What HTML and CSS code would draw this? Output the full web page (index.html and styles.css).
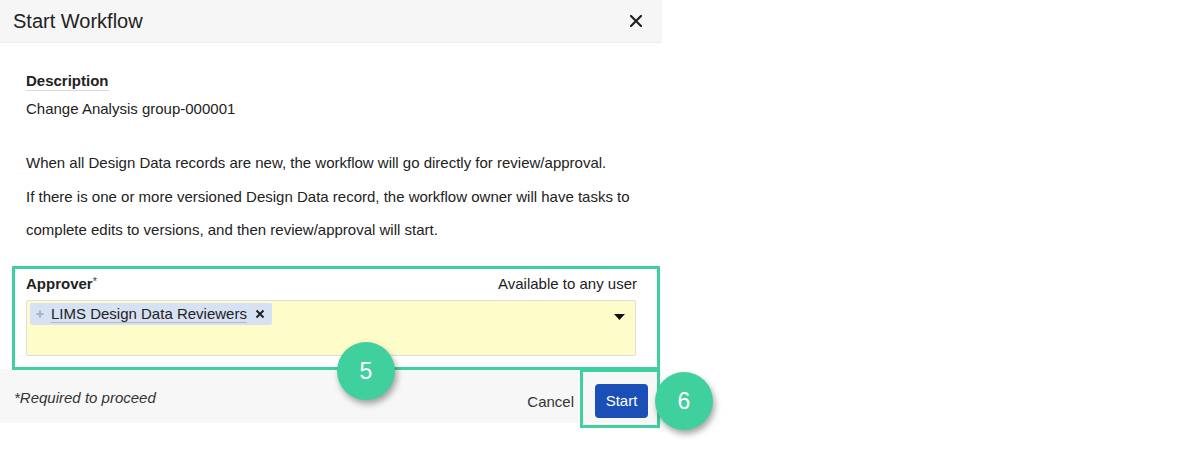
FILE: index.html
```html
<!DOCTYPE html>
<html lang="en">
<head>
    <meta charset="UTF-8">
    <meta name="viewport" content="width=device-width, initial-scale=1.0">
    <title>Start Workflow</title>
    <link rel="stylesheet" href="styles.css">
</head>
<body>
    <div class="dialog">
        <div class="dialog-header">
            <h2>Start Workflow</h2>
            <button class="close" type="button" aria-label="Close">
                <svg width="12" height="12" viewBox="0 0 12 12"><path d="M1 1 L11 11 M11 1 L1 11" stroke="#222" stroke-width="2.2" stroke-linecap="square"/></svg>
            </button>
        </div>

        <div class="dialog-body">
            <div class="section-label">Description</div>
            <p class="description">Change Analysis group-000001</p>
            <div class="notes">
                <p>When all Design Data records are new, the workflow will go directly for review/approval.</p>
                <p>If there is one or more versioned Design Data record, the workflow owner will have tasks to</p>
                <p>complete edits to versions, and then review/approval will start.</p>
            </div>

            <div class="field">
                <div class="field-top">
                    <label>Approver<span class="req">*</span></label>
                    <span class="hint">Available to any user</span>
                </div>
                <div class="picker">
                    <span class="chip">
                        <svg class="chip-grip" width="8" height="8" viewBox="0 0 8 8"><path d="M4 0.5 V7.5 M0.5 4 H7.5" stroke="#a9b3c2" stroke-width="2"/></svg>
                        <span class="chip-text">LIMS Design Data Reviewers</span>
                        <svg class="chip-x" width="10" height="10" viewBox="0 0 10 10"><path d="M1.5 1.5 L8.5 8.5 M8.5 1.5 L1.5 8.5" stroke="#222" stroke-width="2"/></svg>
                    </span>
                    <svg class="caret" width="11" height="6" viewBox="0 0 11 6"><path d="M0 0 H11 L5.5 6 Z" fill="#111"/></svg>
                </div>
            </div>
        </div>

        <div class="dialog-footer">
            <span class="required-note">*Required to proceed</span>
            <div class="actions">
                <button class="btn-link" type="button">Cancel</button>
                <button class="btn-primary" type="button">Start</button>
            </div>
        </div>

        <!-- tutorial annotations -->
        <div class="mark mark-field"></div>
        <div class="mark mark-start"></div>
        <div class="step step-5">5</div>
        <div class="step step-6">6</div>
    </div>
</body>
</html>
```

FILE: styles.css
```css
body {
    margin: 0;
    min-height: 100vh;
    background: #fff;
    font-family: "Liberation Sans", Arial, sans-serif;
    color: #222;
}
.dialog {
    position: relative;
    width: 662px;
    background: #fff;
}
.dialog-header {
    display: flex;
    align-items: center;
    justify-content: space-between;
    height: 43px;
    padding: 0 20px 0 13px;
    background: #f6f6f6;
    border-bottom: 1px solid #ececec;
    box-sizing: border-box;
}
.dialog-header h2 {
    margin: 0;
    font-size: 20px;
    font-weight: normal;
    color: #222;
}
.close {
    display: flex;
    padding: 0;
    border: none;
    background: none;
    cursor: pointer;
}
.dialog-body {
    padding: 29px 26px 0 26px;
}
.section-label {
    display: inline-block;
    font-size: 15px;
    font-weight: bold;
    line-height: 18px;
    border-bottom: 1px solid #d9d9d9;
}
.description {
    margin: 9px 0 0 0;
    font-size: 15px;
    line-height: 18px;
}
.notes {
    margin-top: 28px;
}
.notes p {
    margin: 0;
    font-size: 15px;
    line-height: 33.5px;
    color: #222;
}
.field {
    margin-top: 28px;
}
.field-top {
    display: flex;
    justify-content: space-between;
    align-items: center;
    height: 18px;
    font-size: 15px;
}
.field-top label {
    font-weight: bold;
}
.req {
    font-size: 11px;
    vertical-align: top;
    line-height: 12px;
    color: #444;
    font-weight: normal;
}
.hint {
    margin-right: -1px;
}
.picker {
    display: flex;
    align-items: flex-start;
    justify-content: space-between;
    height: 56px;
    margin-top: 7px;
    padding: 2px 10px 0 3px;
    background: #fefdca;
    border: 1px solid #dedede;
    border-radius: 2px;
    box-sizing: border-box;
}
.chip {
    display: flex;
    align-items: center;
    height: 22px;
    padding: 0 7px 0 6px;
    background: #d6e1f3;
    border-radius: 2px;
    font-size: 15px;
}
.chip-grip {
    margin-right: 7px;
}
.chip-text {
    border-bottom: 1px solid #b4bac4;
    line-height: 17px;
    color: #222;
}
.chip-x {
    margin-left: 8px;
}
.caret {
    margin-top: 11px;
}
.dialog-footer {
    display: flex;
    align-items: center;
    justify-content: space-between;
    height: 54px;
    margin-top: 13px;
    padding: 0 14px;
    background: #f7f7f7;
}
.required-note {
    margin-top: 4px;
    font-size: 15px;
    font-style: italic;
    color: #333;
}
.actions {
    display: flex;
    align-items: center;
    gap: 21px;
}
.btn-link {
    padding: 0;
    border: none;
    background: none;
    font-family: inherit;
    font-size: 15px;
    color: #333;
    cursor: pointer;
    margin-top: 12px;
}
.btn-primary {
    width: 53px;
    height: 34px;
    margin-top: 10px;
    padding: 0;
    border: none;
    border-radius: 4px;
    background: #1a4fb7;
    color: #fff;
    font-family: inherit;
    font-size: 15px;
    cursor: pointer;
}
.mark {
    position: absolute;
    border: 3px solid #40d09d;
    box-sizing: border-box;
}
.mark-field {
    left: 12px;
    top: 266px;
    width: 648px;
    height: 104px;
}
.mark-start {
    left: 580px;
    top: 369px;
    width: 80px;
    height: 59px;
}
.step {
    position: absolute;
    width: 58px;
    height: 58px;
    border-radius: 50%;
    background: #40d09d;
    color: #fff;
    font-size: 23px;
    display: flex;
    align-items: center;
    justify-content: center;
    box-shadow: 2px 4px 6px rgba(0, 0, 0, 0.35);
}
.step-5 {
    left: 337px;
    top: 342px;
}
.step-6 {
    left: 655px;
    top: 372px;
}
```
